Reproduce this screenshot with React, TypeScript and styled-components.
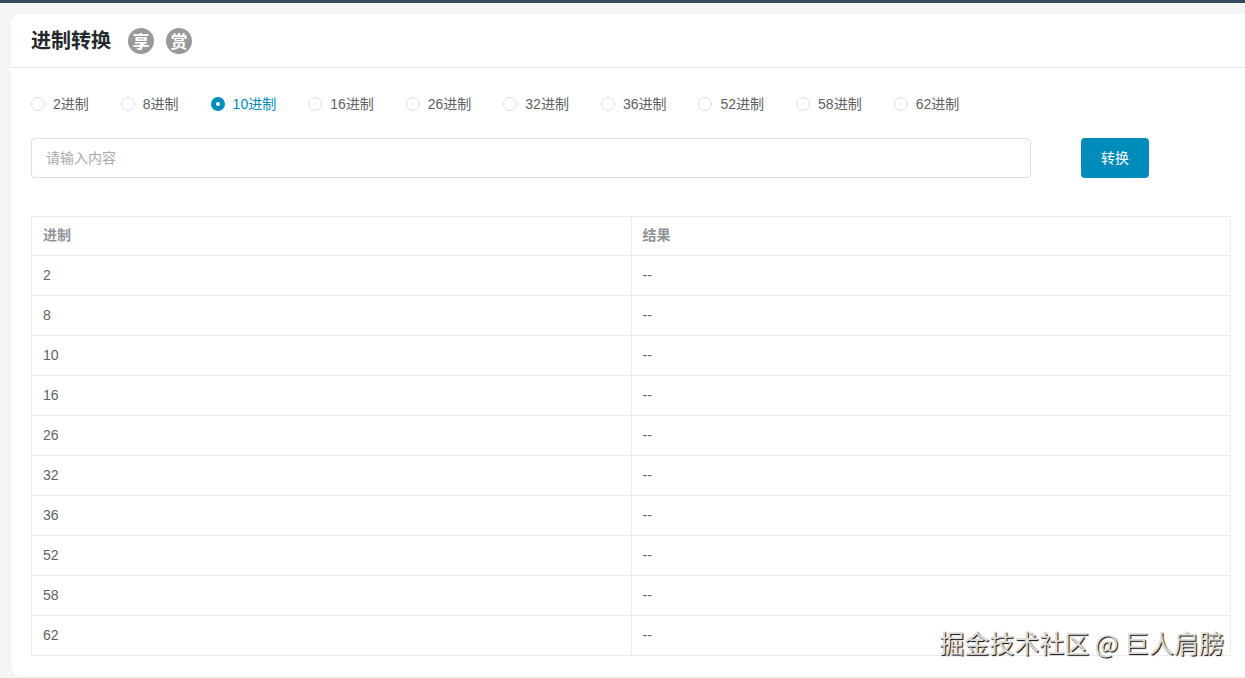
import React, { useState } from "react";
import styled, { createGlobalStyle } from "styled-components";

const GlobalStyle = createGlobalStyle`
  * { box-sizing: border-box; }
  body {
    margin: 0;
    background: #f5f5f5;
    color: #606266;
    font-family: "Liberation Sans", "Noto Sans CJK SC", sans-serif;
    font-size: 14px;
  }
`;

const Page = styled.div`
  position: relative;
  border-top: 3px solid #34495e;
  padding: 11px 0 2px 11px;
`;

const Card = styled.main`
  background: #fff;
  border-radius: 10px 0 0 10px;
`;

const CardHeader = styled.header`
  display: flex;
  align-items: center;
  height: 54px;
  padding: 0 20px;
  border-bottom: 1px solid #e4e7ed;
`;

const Title = styled.h1`
  margin: 0 17px 0 0;
  color: #24292e;
  font-size: 20px;
  line-height: 28px;
`;

const RoundButton = styled.button`
  width: 26px;
  height: 26px;
  margin: 0 12px 0 0;
  padding: 0;
  border: 0;
  border-radius: 50%;
  background: #999;
  color: #fff;
  font: bold 17px/26px "Noto Sans CJK SC", sans-serif;
  cursor: pointer;
`;

const CardBody = styled.form`
  padding: 26px 14px 20px 20px;
`;

const RadioGroup = styled.fieldset`
  display: flex;
  flex-wrap: wrap;
  gap: 10px 32px;
  margin: 0;
  padding: 0;
  border: 0;
`;

const RadioLabel = styled.label<{ $checked: boolean }>`
  display: flex;
  align-items: center;
  gap: 8px;
  line-height: 20px;
  color: ${({ $checked }) => ($checked ? "#008cba" : "#606266")};
  cursor: pointer;
`;

const Radio = styled.input`
  appearance: none;
  width: 14px;
  height: 14px;
  margin: 0;
  border: 1px solid #dcdfe6;
  border-radius: 50%;
  background: #fff;

  &:checked {
    border: 5px solid #008cba;
  }
`;

const InputRow = styled.div`
  display: flex;
  gap: 50px;
  margin: 24px 0 38px;
  padding-right: 82px;
`;

const TextInput = styled.input`
  flex: 1;
  min-width: 0;
  height: 40px;
  padding: 0 14px;
  border: 1px solid #dcdfe6;
  border-radius: 4px;
  background: #fff;
  color: #606266;
  font: inherit;

  &::placeholder {
    color: #a8abb2;
  }
`;

const SubmitButton = styled.button`
  width: 68px;
  height: 40px;
  padding: 0 0 2px;
  border: 0;
  border-radius: 4px;
  background: #008cba;
  color: #fff;
  font: inherit;
  cursor: pointer;
`;

const Table = styled.table`
  width: 100%;
  table-layout: fixed;
  border-collapse: separate;
  border-spacing: 0;
  border: solid #ebeef0;
  border-width: 1px 0 0 1px;
`;

const HeadCell = styled.th`
  height: 39px;
  padding: 0 11px 4px;
  border: solid #ebeef0;
  border-width: 0 1px 1px 0;
  color: #909399;
  text-align: left;
`;

const Cell = styled.td`
  height: 40px;
  padding: 0 11px 2px;
  border: solid #ebeef0;
  border-width: 0 1px 1px 0;
`;

const Watermark = styled.div`
  position: absolute;
  right: 21px;
  bottom: 18px;
  color: #ddd;
  font-family: "Noto Sans CJK SC", sans-serif;
  font-size: 25px;
  line-height: 36px;
  text-shadow: 1px 1px 1px #000;
  pointer-events: none;
`;

const BASES = [2, 8, 10, 16, 26, 32, 36, 52, 58, 62];
const DIGITS = "0123456789abcdefghijklmnopqrstuvwxyzABCDEFGHIJKLMNOPQRSTUVWXYZ";

function parse(text: string, base: number): bigint | null {
  const source = base <= 36 ? text.trim().toLowerCase() : text.trim();
  if (!source) return null;
  let value = BigInt(0);
  for (const char of source) {
    const digit = DIGITS.indexOf(char);
    if (digit < 0 || digit >= base) return null;
    value = value * BigInt(base) + BigInt(digit);
  }
  return value;
}

function format(value: bigint | null, base: number): string {
  if (value === null) return "--";
  let rest = value;
  let out = "";
  do {
    out = DIGITS[Number(rest % BigInt(base))] + out;
    rest = rest / BigInt(base);
  } while (rest > BigInt(0));
  return out;
}

export default function App() {
  const [base, setBase] = useState(10);
  const [text, setText] = useState("");
  const [value, setValue] = useState<bigint | null>(null);

  const convert = (event: React.FormEvent) => {
    event.preventDefault();
    setValue(parse(text, base));
  };

  return (
    <Page>
      <GlobalStyle />
      <Card>
        <CardHeader>
          <Title>进制转换</Title>
          <RoundButton type="button">享</RoundButton>
          <RoundButton type="button">赏</RoundButton>
        </CardHeader>
        <CardBody onSubmit={convert}>
          <RadioGroup aria-label="进制">
            {BASES.map((item) => (
              <RadioLabel key={item} $checked={item === base}>
                <Radio
                  type="radio"
                  name="base"
                  value={item}
                  checked={item === base}
                  onChange={() => setBase(item)}
                />
                {item}进制
              </RadioLabel>
            ))}
          </RadioGroup>
          <InputRow>
            <TextInput
              type="text"
              aria-label="请输入内容"
              placeholder="请输入内容"
              value={text}
              onChange={(event) => setText(event.target.value)}
            />
            <SubmitButton type="submit">转换</SubmitButton>
          </InputRow>
          <Table>
            <thead>
              <tr>
                <HeadCell scope="col">进制</HeadCell>
                <HeadCell scope="col">结果</HeadCell>
              </tr>
            </thead>
            <tbody>
              {BASES.map((item) => (
                <tr key={item}>
                  <Cell>{item}</Cell>
                  <Cell>{format(value, item)}</Cell>
                </tr>
              ))}
            </tbody>
          </Table>
        </CardBody>
      </Card>
      <Watermark>掘金技术社区 @ 巨人肩膀</Watermark>
    </Page>
  );
}
